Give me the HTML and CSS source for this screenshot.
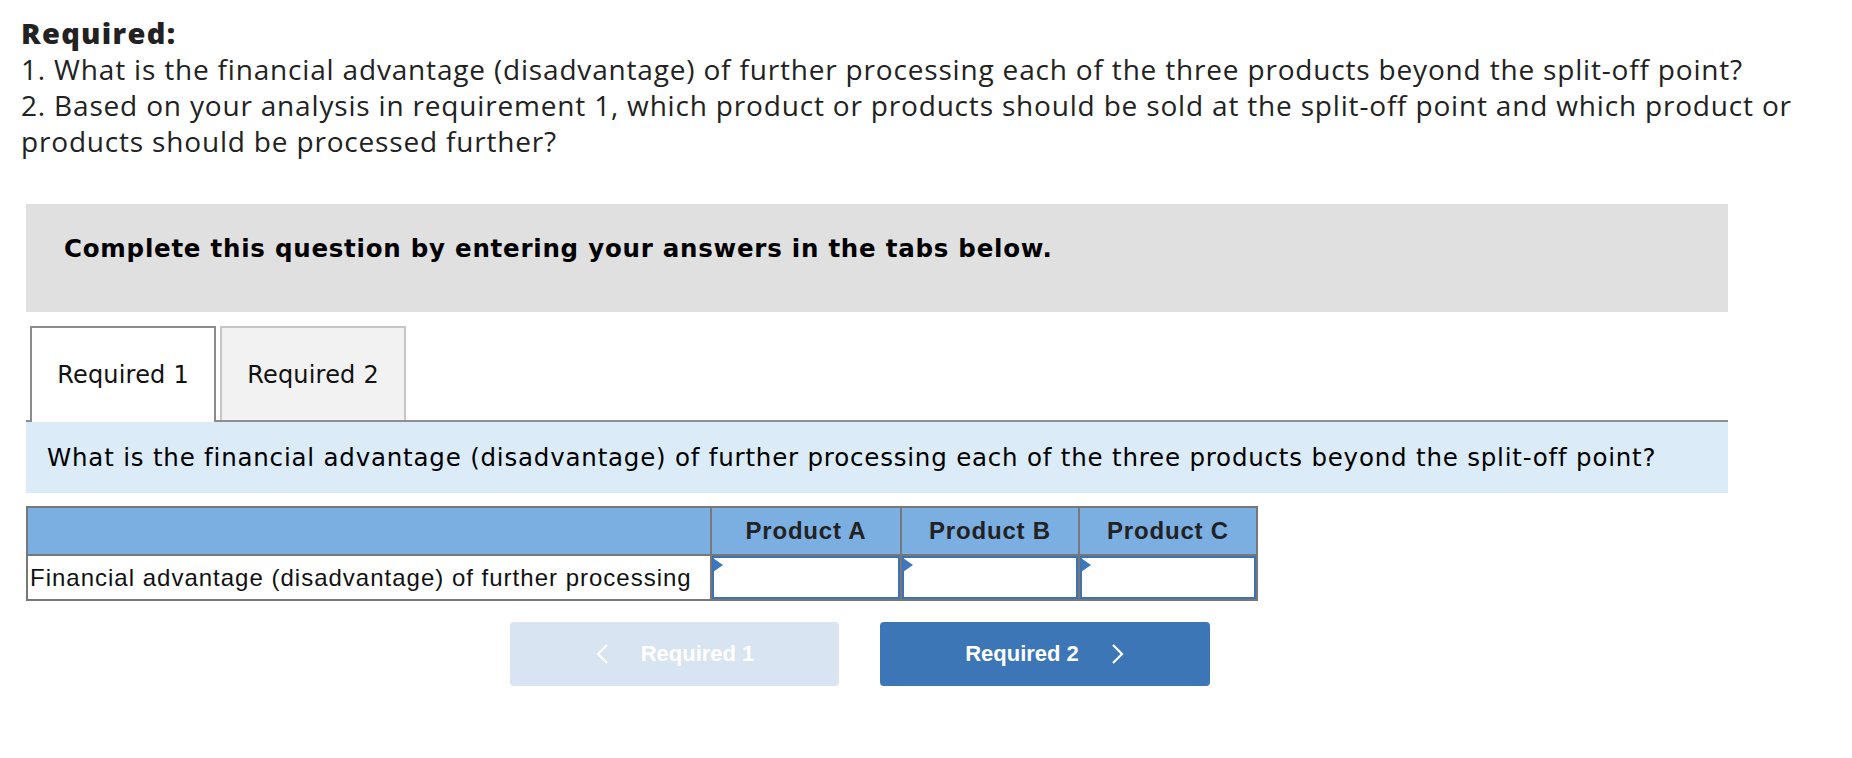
FILE: index.html
```html
<!DOCTYPE html>
<html lang="en">
<head>
<meta charset="utf-8">
<title>Required</title>
<link rel="stylesheet" href="styles.css">
</head>
<body>
<div class="page">
  <div class="required">
    <div class="req-title">Required:</div>
    <div class="req-item">1. What is the financial advantage (disadvantage) of further processing each of the three products beyond the split-off point?</div>
    <div class="req-item">2. Based on your analysis in requirement 1, which product or products should be sold at the split-off point and which product or products should be processed further?</div>
  </div>

  <div class="instructions">Complete this question by entering your answers in the tabs below.</div>

  <div class="tabs">
    <div class="tab active">Required 1</div>
    <div class="tab">Required 2</div>
  </div>

  <div class="prompt">What is the financial advantage (disadvantage) of further processing each of the three products beyond the split-off point?</div>

  <div class="grid">
    <div class="cell head"></div>
    <div class="cell head">Product A</div>
    <div class="cell head">Product B</div>
    <div class="cell head">Product C</div>
    <div class="cell label">Financial advantage (disadvantage) of further processing</div>
    <div class="cell entry"><span class="field"></span><span class="flag"></span></div>
    <div class="cell entry"><span class="field"></span><span class="flag"></span></div>
    <div class="cell entry"><span class="field"></span><span class="flag"></span></div>
  </div>

  <div class="nav">
    <button class="nav-btn prev" type="button">
      <svg class="chev" width="14" height="22" viewBox="0 0 14 22"><path d="M12 2 L3 11 L12 20" fill="none" stroke="#fff" stroke-width="2.2"/></svg>
      <span>Required 1</span>
    </button>
    <button class="nav-btn next" type="button">
      <span>Required 2</span>
      <svg class="chev" width="14" height="22" viewBox="0 0 14 22"><path d="M2 2 L11 11 L2 20" fill="none" stroke="#fff" stroke-width="2.2"/></svg>
    </button>
  </div>
</div>
</body>
</html>
```

FILE: styles.css
```css
html, body {
  margin: 0;
  padding: 0;
  background: #fff;
}

.page {
  padding-top: 15px;
}

.required {
  padding-left: 21px;
  font-family: "Open Sans", "Lato", sans-serif;
  font-size: 28px;
  letter-spacing: 0.82px;
  line-height: 36px;
  color: #222;
}

.req-title {
  font-weight: 800;
  font-size: 29px;
  letter-spacing: 1.3px;
}

.instructions {
  margin: 45px 0 0 26px;
  width: 1702px;
  box-sizing: border-box;
  height: 108px;
  padding: 30px 38px 0;
  background: #e0e0e0;
  font-family: "DejaVu Sans", Verdana, sans-serif;
  font-weight: 700;
  font-size: 24.5px;
  letter-spacing: 0.75px;
  line-height: 30px;
  color: #000;
}

.tabs {
  margin: 14px 0 0 26px;
  width: 1702px;
  box-sizing: border-box;
  padding-left: 4px;
  display: flex;
  align-items: flex-start;
  gap: 4px;
  border-bottom: 2px solid #8f8f8f;
  height: 96px;
}

.tab {
  width: 186px;
  height: 94px;
  box-sizing: border-box;
  border: 2px solid #c6c6c6;
  border-bottom: none;
  background: #f2f2f2;
  display: flex;
  align-items: center;
  justify-content: center;
  font-family: "DejaVu Sans", Verdana, sans-serif;
  font-size: 24px;
  letter-spacing: 0.2px;
  color: #111;
  padding-top: 2px;
}

.tab.active {
  height: 96px;
  border-color: #8c8c8c;
  background: #fff;
  position: relative;
  padding-bottom: 2px;
}

.prompt {
  margin-left: 26px;
  width: 1702px;
  box-sizing: border-box;
  height: 71px;
  padding-left: 21px;
  display: flex;
  align-items: center;
  background: #dbebf8;
  font-family: "DejaVu Sans", Verdana, sans-serif;
  font-size: 24.5px;
  letter-spacing: 0.8px;
  color: #000;
}

.grid {
  margin: 13px 0 0 26px;
  display: grid;
  grid-template-columns: 684px 190px 178px 178px;
  grid-template-rows: 48px 45px;
  width: max-content;
  border-top: 2px solid #777;
  border-left: 2px solid #777;
  font-family: "Liberation Sans", Arial, sans-serif;
}

.cell {
  border-right: 2px solid #777;
  border-bottom: 2px solid #777;
}

.head {
  background: #7baee1;
  display: flex;
  align-items: center;
  justify-content: center;
  font-weight: 700;
  font-size: 24px;
  letter-spacing: 0.8px;
  color: #222;
}

.label {
  display: flex;
  align-items: center;
  padding-left: 2px;
  font-size: 24px;
  letter-spacing: 1px;
  color: #111;
  background: #fff;
}

.entry {
  position: relative;
  background: #fff;
}

.field {
  display: block;
  height: 100%;
  box-sizing: border-box;
  border: 2px solid #3d73b5;
}

.flag {
  position: absolute;
  left: 1px;
  top: 2px;
  width: 0;
  height: 0;
  border-left: 10px solid #3d78bf;
  border-top: 7px solid transparent;
  border-bottom: 7px solid transparent;
}

.nav {
  margin: 21px 0 0 510px;
  display: flex;
  gap: 41px;
}

.nav-btn {
  width: 330px;
  height: 64px;
  border: none;
  border-radius: 4px;
  display: flex;
  align-items: center;
  justify-content: center;
  gap: 32px;
  font-family: "Liberation Sans", Arial, sans-serif;
  font-weight: 700;
  font-size: 22px;
  color: #fff;
  padding: 0;
}

.nav-btn.prev {
  width: 329px;
  background: #d8e4f1;
}

.nav-btn.next {
  background: #3c76b6;
}

.chev {
  display: block;
}
```
